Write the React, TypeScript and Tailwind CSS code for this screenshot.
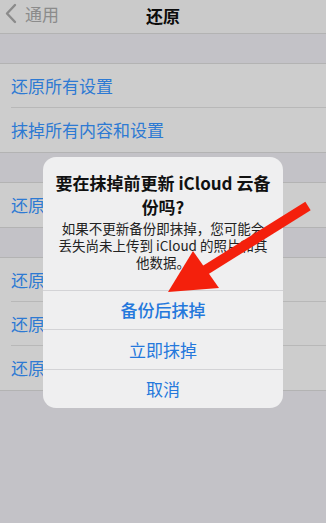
const FONT = { fontFamily: '"Noto Sans CJK SC", "Noto Sans", sans-serif' };

function Row({ label, last }: { label: string; last?: boolean }) {
  return (
    <div className="bg-[#cdcdcd] pl-[11px]">
      <div
        className={`h-[44px] flex items-center text-[17px] text-[#2d7ad3] ${
          last ? "" : "border-b border-[#b8b8b8]"
        }`}
      >
        {label}
      </div>
    </div>
  );
}

function Gap() {
  return <div className="h-[31px] bg-[#c3c2c7] border-y border-[#b3b3b3]" />;
}

function Alert() {
  return (
    <div className="absolute left-[43px] top-[157px] w-[240px] rounded-[13px] bg-[#efeff0] overflow-hidden">
      <div className="px-3 pt-[14px] pb-[19px] text-center">
        <p className="text-[17px] leading-[24px] font-semibold text-[#111] whitespace-nowrap">
          要在抹掉前更新 iCloud 云备
          <br />
          份吗?
        </p>
        <p className="mt-[1px] text-[13.5px] leading-[17px] text-[#222] whitespace-nowrap">
          如果不更新备份即抹掉，您可能会
          <br />
          丢失尚未上传到 iCloud 的照片和其
          <br />
          他数据。
        </p>
      </div>
      <div className="border-t border-[#d3d3d6] h-[39px] flex items-center justify-center text-[17px] font-medium text-[#2478dc]">
        备份后抹掉
      </div>
      <div className="border-t border-[#d3d3d6] h-[40px] flex items-center justify-center text-[17px] text-[#2478dc]">
        立即抹掉
      </div>
      <div className="border-t border-[#d3d3d6] h-[39px] flex items-center justify-center text-[17px] text-[#2478dc]">
        取消
      </div>
    </div>
  );
}

function Arrow() {
  return (
    <svg
      className="absolute left-0 top-0 pointer-events-none"
      width="326"
      height="523"
      viewBox="0 0 326 523"
    >
      <line x1="308" y1="206" x2="204" y2="271" stroke="#f4200c" strokeWidth="10" />
      <polygon points="168,292 193,251 219,288" fill="#f4200c" />
    </svg>
  );
}

export default function App() {
  return (
    <div className="relative w-[326px] h-[523px] overflow-hidden bg-[#c3c2c7]" style={FONT}>
      {/* nav bar */}
      <div className="h-[33px] bg-[#cacaca] flex items-center pb-[5px] relative">
        <div className="flex items-center text-[#8b8b8b] text-[17px]">
          <svg width="20" height="24" viewBox="0 0 20 24" className="ml-[3px]">
            <polyline
              points="12,3 4,11.5 12,20"
              fill="none"
              stroke="#8b8b8b"
              strokeWidth="2.4"
              strokeLinecap="round"
              strokeLinejoin="round"
            />
          </svg>
          <span className="ml-[2px]">通用</span>
        </div>
        <div className="absolute inset-x-0 top-[3px] text-center text-[17px] font-semibold text-[#0c0c0c]">
          还原
        </div>
      </div>
      <Gap />
      <Row label="还原所有设置" />
      <Row label="抹掉所有内容和设置" last />
      <Gap />
      <Row label="还原网络设置" last />
      <Gap />
      <Row label="还原键盘字典" />
      <Row label="还原主屏幕布局" />
      <Row label="还原位置与隐私" last />
      <div className="border-t border-[#b3b3b3]" />

      <Alert />
      <Arrow />
    </div>
  );
}
